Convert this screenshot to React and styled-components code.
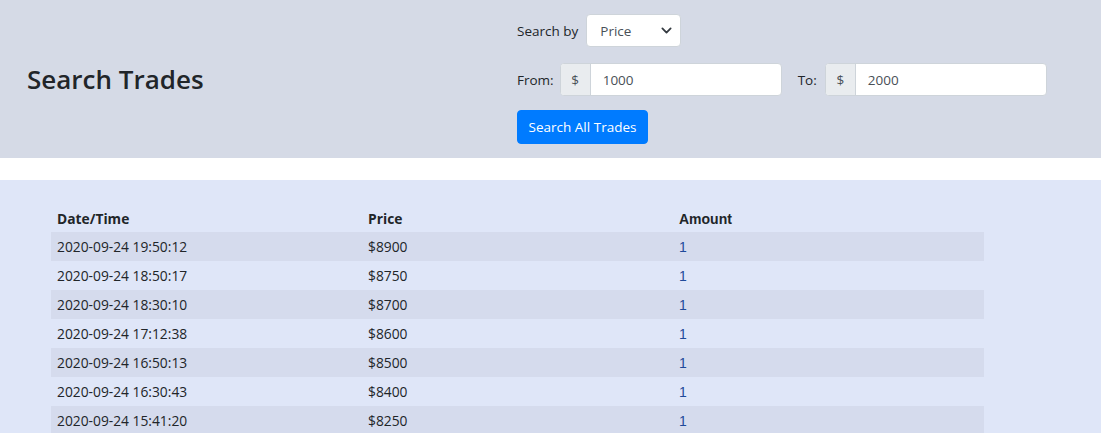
import React from "react";
import styled, { createGlobalStyle } from "styled-components";

const Global = createGlobalStyle`
  html, body { margin: 0; padding: 0; background: #ffffff; }
  body { font-family: "Open Sans", "Noto Sans", sans-serif; color: #212529; }
  * { box-sizing: border-box; }
`;

const Header = styled.header`
  background: #d5dae6;
  height: 158px;
  display: grid;
  grid-template-columns: 517px 1fr;
  align-items: center;
`;

const Title = styled.h2`
  margin: 0 0 0 27px;
  font-size: 26px;
  font-weight: 600;
  letter-spacing: 0;
  color: #212529;
`;

const Form = styled.div`
  align-self: start;
  display: flex;
  flex-direction: column;
  padding-top: 14px;
`;

const Row = styled.div`
  display: flex;
  align-items: center;
  margin-bottom: ${(p) => p.$mb || 0}px;
`;

const Label = styled.span`
  font-size: 13.5px;
  color: #212529;
  margin-right: ${(p) => p.$mr || 8}px;
  margin-left: ${(p) => p.$ml || 0}px;
`;

const SelectBox = styled.div`
  width: 95px;
  height: 33px;
  background: #fff;
  border: 1px solid #ced4da;
  border-radius: 4px;
  display: flex;
  align-items: center;
  justify-content: space-between;
  padding: 0 8px 0 13px;
  font-size: 13.5px;
  color: #495057;
`;

const Group = styled.div`
  display: flex;
  width: 222px;
  height: 33px;
  border: 1px solid #ced4da;
  border-radius: 4px;
  overflow: hidden;
  background: #fff;
`;

const Addon = styled.div`
  width: 30px;
  background: #e9ecef;
  border-right: 1px solid #ced4da;
  display: flex;
  align-items: center;
  justify-content: center;
  font-size: 13.5px;
  color: #495057;
`;

const Input = styled.div`
  flex: 1;
  display: flex;
  align-items: center;
  padding-left: 12px;
  font-size: 13.5px;
  color: #495057;
`;

const Button = styled.button`
  width: 131px;
  height: 34px;
  background: #007bff;
  color: #fff;
  border: 1px solid #007bff;
  border-radius: 4px;
  font-family: inherit;
  font-size: 13.5px;
  padding: 0;
  text-align: center;
`;

const Spacer = styled.div`
  height: 22px;
  background: #ffffff;
`;

const Content = styled.main`
  background: #dfe6f8;
  min-height: 253px;
  padding: 23px 0 0 51px;
`;

const Table = styled.table`
  width: 933px;
  border-collapse: collapse;
  font-size: 13.8px;
`;

const Th = styled.th`
  text-align: left;
  font-weight: 700;
  height: 29px;
  padding: 2px 6px 0;
  vertical-align: middle;
  font-family: ${(p) => (p.$arial ? '"Liberation Sans", Arial, sans-serif' : "inherit")};
  font-size: ${(p) => (p.$arial ? "14px" : "inherit")};
  color: #212529;
`;

const Tr = styled.tr`
  background: ${(p) => (p.$striped ? "#d5dbed" : "transparent")};
`;

const Td = styled.td`
  height: 29px;
  padding: 0 6px;
  vertical-align: middle;
  width: 33.33%;
  font-family: ${(p) => (p.$arial ? '"Liberation Sans", Arial, sans-serif' : "inherit")};
  font-size: ${(p) => (p.$arial ? "14px" : "inherit")};
  color: ${(p) => (p.$arial ? "#1f4a9a" : "#212529")};
`;

const rows = [
  ["2020-09-24 19:50:12", "$8900"],
  ["2020-09-24 18:50:17", "$8750"],
  ["2020-09-24 18:30:10", "$8700"],
  ["2020-09-24 17:12:38", "$8600"],
  ["2020-09-24 16:50:13", "$8500"],
  ["2020-09-24 16:30:43", "$8400"],
  ["2020-09-24 15:41:20", "$8250"],
];

const Chevron = () => (
  <svg width="11" height="11" viewBox="0 0 16 16">
    <path d="M2 5l6 6 6-6" fill="none" stroke="#343a40" strokeWidth="2.6" strokeLinecap="round" strokeLinejoin="round" />
  </svg>
);

export default function App() {
  return (
    <>
      <Global />
      <Header>
        <Title>Search Trades</Title>
        <Form>
          <Row $mb={16}>
            <Label $mr={8}>Search by</Label>
            <SelectBox>
              <span>Price</span>
              <Chevron />
            </SelectBox>
          </Row>
          <Row $mb={14}>
            <Label $mr={6}>From:</Label>
            <Group>
              <Addon>$</Addon>
              <Input>1000</Input>
            </Group>
            <Label $ml={16} $mr={8}>To:</Label>
            <Group>
              <Addon>$</Addon>
              <Input>2000</Input>
            </Group>
          </Row>
          <Row>
            <Button>Search All Trades</Button>
          </Row>
        </Form>
      </Header>
      <Spacer />
      <Content>
        <Table>
          <thead>
            <tr>
              <Th>Date/Time</Th>
              <Th>Price</Th>
              <Th $arial>Amount</Th>
            </tr>
          </thead>
          <tbody>
            {rows.map((r, i) => (
              <Tr key={i} $striped={i % 2 === 0}>
                <Td>{r[0]}</Td>
                <Td>{r[1]}</Td>
                <Td $arial>1</Td>
              </Tr>
            ))}
          </tbody>
        </Table>
      </Content>
    </>
  );
}
